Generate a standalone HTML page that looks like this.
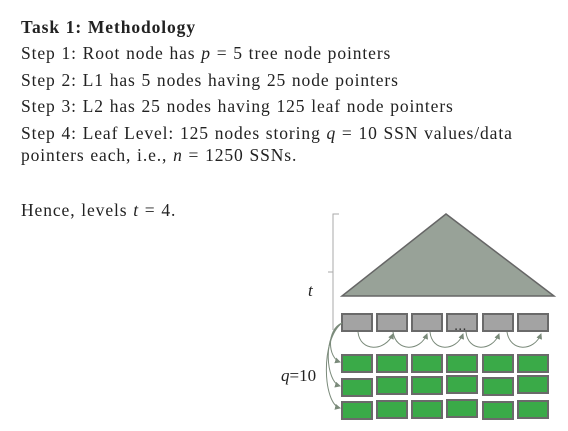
<!DOCTYPE html>
<html><head><style>
body{margin:0;background:#fff;width:568px;height:431px;overflow:hidden;position:relative;font-family:"Liberation Serif",serif;color:#222;}
.l{position:absolute;left:21px;font-size:17.5px;letter-spacing:0.9px;word-spacing:0.5px;white-space:nowrap;}
b{font-weight:bold}
</style></head><body>
<div class="l" style="top:17px"><b>Task 1: Methodology</b></div>
<div class="l" style="top:43px">Step 1: Root node has <i>p</i> = 5 tree node pointers</div>
<div class="l" style="top:70px">Step 2: L1 has 5 nodes having 25 node pointers</div>
<div class="l" style="top:96px">Step 3: L2 has 25 nodes having 125 leaf node pointers</div>
<div class="l" style="top:123px">Step 4: Leaf Level: 125 nodes storing <i>q</i> = 10 SSN values/data</div>
<div class="l" style="top:145px">pointers each, i.e., <i>n</i> = 1250 SSNs.</div>
<div class="l" style="top:200px">Hence, levels <i>t</i> = 4.</div>
<svg width="568" height="431" style="position:absolute;left:0;top:0">
<defs><marker id="a" markerWidth="6" markerHeight="6" refX="5" refY="3" orient="auto"><path d="M0,0 L6,3 L0,6z" fill="#7a8a7a"/></marker></defs>
<path d="M339,214 h-6 v58 h-5 M333,272 v58" stroke="#aaa" fill="none" stroke-width="1"/>
<text x="308" y="296" font-family="Liberation Serif" font-style="italic" font-size="17" fill="#222">t</text>
<text x="281" y="381" font-family="Liberation Serif" font-size="17" fill="#222"><tspan font-style="italic">q</tspan>=10</text>
<polygon points="446,214 342,296 554,296" fill="#98a298" stroke="#666" stroke-width="1.5"/>
<g fill="#a3a3a3" stroke="#6a6a6a" stroke-width="2">
<rect x="342" y="314" width="30" height="17"/><rect x="377" y="314" width="30" height="17"/><rect x="412" y="314" width="30" height="17"/><rect x="447" y="314" width="30" height="17"/><rect x="483" y="314" width="30" height="17"/><rect x="518" y="314" width="30" height="17"/>
</g>
<text x="454" y="330" font-size="15" fill="#333" font-family="Liberation Sans">...</text>
<g fill="none" stroke="#7a8a7a" stroke-width="1" marker-end="url(#a)">
<path d="M358,332 C360,352 385,352 393,334"/><path d="M393,332 C396,352 420,352 427,334"/><path d="M430,332 C432,352 456,352 463,334"/><path d="M466,332 C468,352 492,352 499,334"/><path d="M507,332 C510,352 534,352 541,334"/>
<path d="M342,323 C326,330 328,358 340,362"/><path d="M342,323 C322,335 326,382 340,386"/><path d="M342,323 C320,340 323,404 340,408"/>
</g>
<g fill="#3aaa48" stroke="#6a6a6a" stroke-width="2">
<rect x="342" y="355" width="30" height="17"/><rect x="377" y="355" width="30" height="17"/><rect x="412" y="355" width="30" height="17"/><rect x="447" y="355" width="30" height="17"/><rect x="483" y="355" width="30" height="17"/><rect x="518" y="355" width="30" height="17"/>
<rect x="342" y="379" width="30" height="17"/><rect x="377" y="377" width="30" height="17"/><rect x="412" y="377" width="30" height="17"/><rect x="447" y="376" width="30" height="17"/><rect x="483" y="378" width="30" height="17"/><rect x="518" y="376" width="30" height="17"/>
<rect x="342" y="402" width="30" height="17"/><rect x="377" y="401" width="30" height="17"/><rect x="412" y="401" width="30" height="17"/><rect x="447" y="400" width="30" height="17"/><rect x="483" y="402" width="30" height="17"/><rect x="518" y="401" width="30" height="17"/>
</g>
</svg>
</body></html>
